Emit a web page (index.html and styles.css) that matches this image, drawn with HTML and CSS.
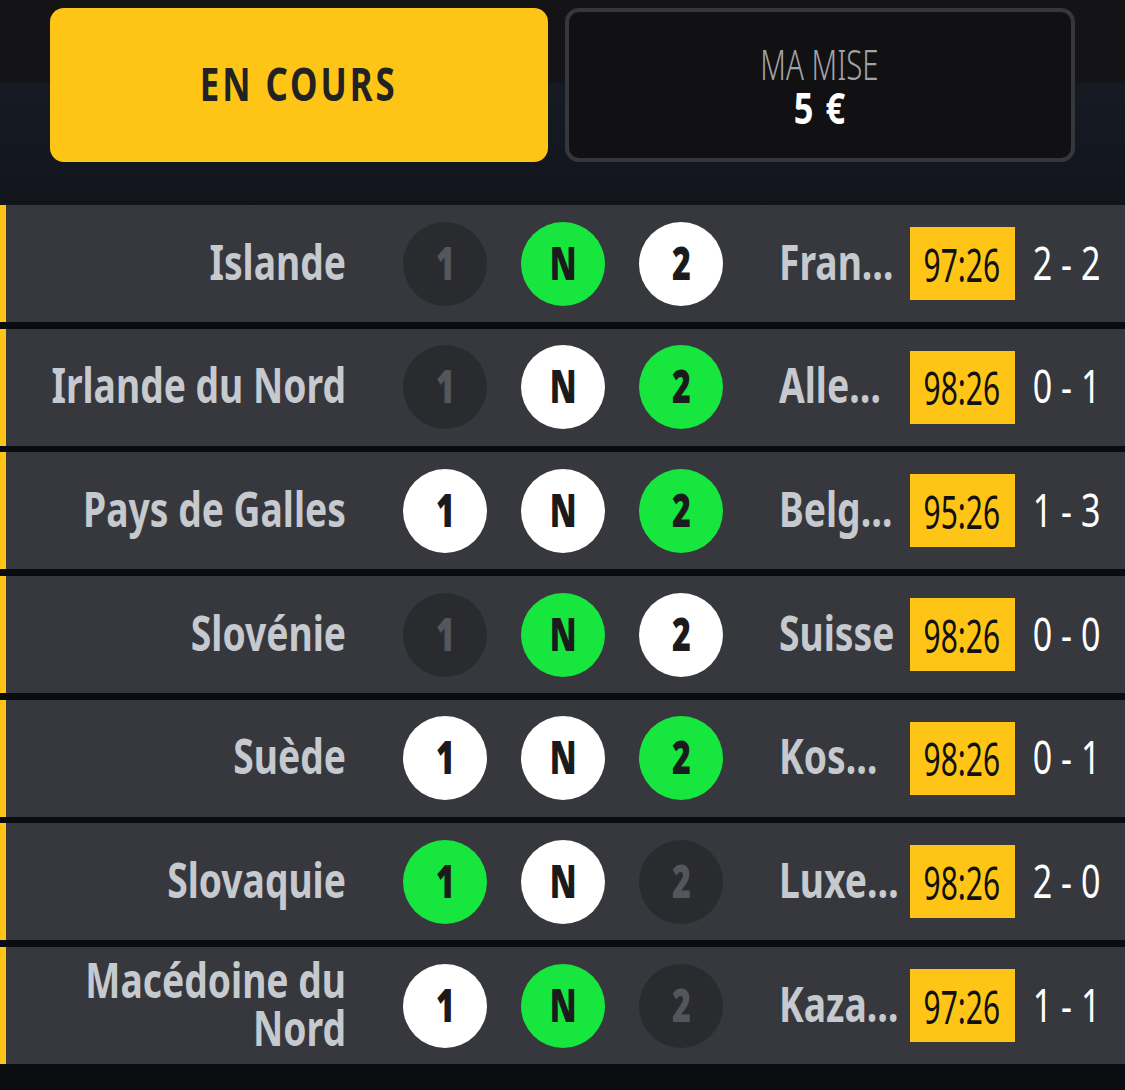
FILE: index.html
```html
<!DOCTYPE html>
<html lang="fr">
<head>
    <meta charset="UTF-8">
    <meta name="viewport" content="width=device-width, initial-scale=1.0">
    <title>Mes paris en cours</title>
    <link rel="stylesheet" href="styles.css">
</head>
<body>
    <header class="top">
        <div class="tab active"><span>EN COURS</span></div>
        <div class="tab stake">
            <span class="stake-label">MA MISE</span>
            <span class="stake-value">5 €</span>
        </div>
    </header>

    <div class="matches">
        <div class="match">
            <div class="home"><span>Islande</span></div>
            <div class="picks">
                <span class="pick off"><b>1</b></span>
                <span class="pick win"><b>N</b></span>
                <span class="pick"><b>2</b></span>
            </div>
            <div class="away"><span>France</span></div>
            <div class="clock"><span>97:26</span></div>
            <div class="score"><span>2 - 2</span></div>
        </div>
        <div class="match">
            <div class="home"><span>Irlande du Nord</span></div>
            <div class="picks">
                <span class="pick off"><b>1</b></span>
                <span class="pick"><b>N</b></span>
                <span class="pick win"><b>2</b></span>
            </div>
            <div class="away"><span>Allemagne</span></div>
            <div class="clock"><span>98:26</span></div>
            <div class="score"><span>0 - 1</span></div>
        </div>
        <div class="match">
            <div class="home"><span>Pays de Galles</span></div>
            <div class="picks">
                <span class="pick"><b>1</b></span>
                <span class="pick"><b>N</b></span>
                <span class="pick win"><b>2</b></span>
            </div>
            <div class="away"><span>Belgique</span></div>
            <div class="clock"><span>95:26</span></div>
            <div class="score"><span>1 - 3</span></div>
        </div>
        <div class="match">
            <div class="home"><span>Slovénie</span></div>
            <div class="picks">
                <span class="pick off"><b>1</b></span>
                <span class="pick win"><b>N</b></span>
                <span class="pick"><b>2</b></span>
            </div>
            <div class="away"><span>Suisse</span></div>
            <div class="clock"><span>98:26</span></div>
            <div class="score"><span>0 - 0</span></div>
        </div>
        <div class="match">
            <div class="home"><span>Suède</span></div>
            <div class="picks">
                <span class="pick"><b>1</b></span>
                <span class="pick"><b>N</b></span>
                <span class="pick win"><b>2</b></span>
            </div>
            <div class="away"><span>Kosovo</span></div>
            <div class="clock"><span>98:26</span></div>
            <div class="score"><span>0 - 1</span></div>
        </div>
        <div class="match">
            <div class="home"><span>Slovaquie</span></div>
            <div class="picks">
                <span class="pick win"><b>1</b></span>
                <span class="pick"><b>N</b></span>
                <span class="pick off"><b>2</b></span>
            </div>
            <div class="away"><span>Luxembourg</span></div>
            <div class="clock"><span>98:26</span></div>
            <div class="score"><span>2 - 0</span></div>
        </div>
        <div class="match">
            <div class="home"><span>Macédoine du Nord</span></div>
            <div class="picks">
                <span class="pick"><b>1</b></span>
                <span class="pick win"><b>N</b></span>
                <span class="pick off"><b>2</b></span>
            </div>
            <div class="away"><span>Kazakhstan</span></div>
            <div class="clock"><span>97:26</span></div>
            <div class="score"><span>1 - 1</span></div>
        </div>
    </div>
</body>
</html>
```

FILE: styles.css
```css
/* no condensed face is installed, so text is squeezed with scaleX */
body {
    margin: 0;
    background: #0b0c10;
    font-family: "Noto Sans", "DejaVu Sans", sans-serif;
    color: #fff;
}
.top {
    display: flex;
    gap: 17px;
    height: 205px;
    box-sizing: border-box;
    padding: 8px 50px 0 50px;
    background: linear-gradient(180deg, #141416 0%, #141417 40%, #161a23 41%, #12151c 100%);
}
.tab {
    flex: 1;
    height: 154px;
    box-sizing: border-box;
    border-radius: 14px;
    display: flex;
    flex-direction: column;
    justify-content: center;
    align-items: center;
}
.active {
    background: #fec517;
    color: #222;
    font-weight: bold;
    font-size: 47px;
    letter-spacing: 4px;
    padding-bottom: 4px;
}
.active span {
    transform: scaleX(0.74);
}
.stake {
    flex: 1.01;
    background: #111113;
    border: 4px solid #36373b;
    padding-top: 2px;
}
.stake-label {
    font-size: 42px;
    font-weight: 300;
    color: #a3a3a6;
    line-height: 44px;
    transform: scaleX(0.7);
}
.stake-value {
    font-size: 43px;
    font-weight: bold;
    line-height: 44px;
    letter-spacing: 2px;
    transform: scaleX(0.8);
}
.matches {
    display: flex;
    flex-direction: column;
    gap: 6.7px;
}
.match {
    display: flex;
    align-items: center;
    height: 117px;
    background: #37383d;
    border-left: 6px solid #fec517;
}
.home {
    width: 340px;
    flex-shrink: 0;
    display: flex;
    justify-content: flex-end;
    padding-bottom: 6px;
    font-size: 49px;
    font-weight: bold;
    line-height: 48px;
    color: #c6c9cd;
}
.home span {
    flex: none;
    width: 447px;
    text-align: right;
    transform: scaleX(0.76);
    transform-origin: right center;
}
.picks {
    display: flex;
    gap: 34px;
    margin-left: 57px;
}
.pick {
    width: 84px;
    height: 84px;
    border-radius: 50%;
    background: #fff;
    color: #1b1b1d;
    display: flex;
    align-items: center;
    justify-content: center;
    font-size: 46px;
    font-weight: bold;
}
.pick b {
    transform: scaleX(0.7);
    margin-bottom: 4px;
}
.pick.win {
    background: #17e63f;
}
.pick.off {
    background: #2a2b2f;
    color: #55565b;
}
.away {
    flex: 1;
    min-width: 0;
    margin-left: 56px;
    padding-bottom: 6px;
    font-size: 49px;
    font-weight: bold;
    color: #c6c9cd;
}
.away span {
    display: block;
    width: 131%;
    white-space: nowrap;
    overflow: hidden;
    text-overflow: ellipsis;
    transform: scaleX(0.76);
    transform-origin: left center;
}
.clock {
    margin-left: 10px;
    width: 105px;
    height: 73px;
    flex-shrink: 0;
    background: #fec517;
    color: #111;
    font-size: 46px;
    display: flex;
    align-items: center;
    justify-content: center;
}
.clock span {
    flex: none;
    transform: scaleX(0.65);
}
.score {
    margin-left: -6px;
    margin-right: 25px;
    padding-bottom: 4px;
    font-size: 46px;
    white-space: nowrap;
}
.score span {
    display: inline-block;
    transform: scaleX(0.74);
    transform-origin: right center;
}
```
